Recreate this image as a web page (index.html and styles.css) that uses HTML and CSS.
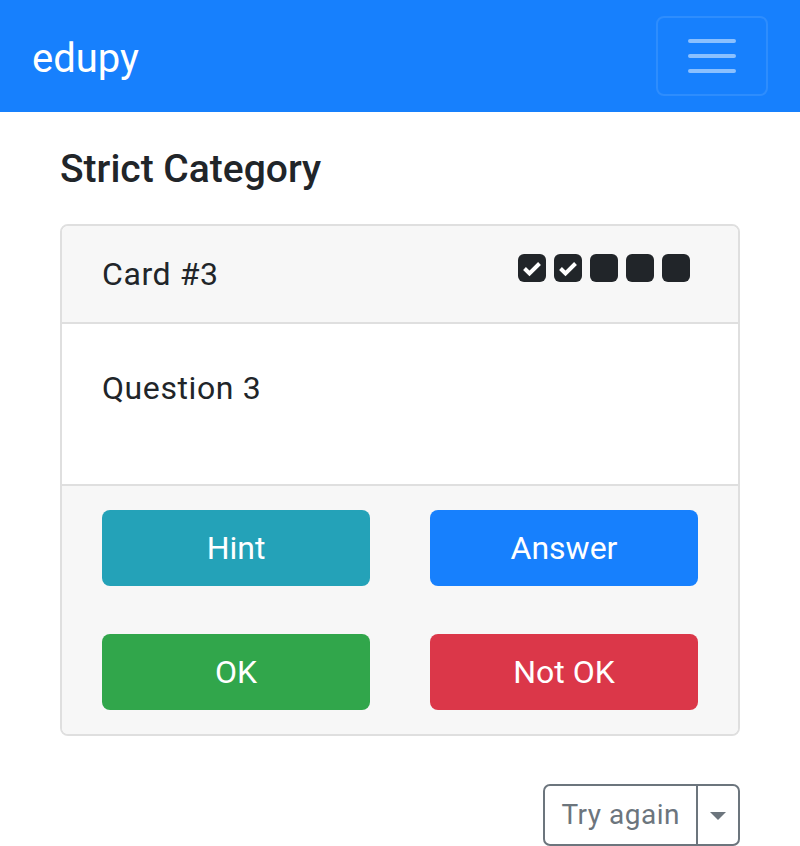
FILE: index.html
```html
<!DOCTYPE html>
<html lang="en">
<head>
<meta charset="utf-8">
<title>edupy</title>
<link rel="stylesheet" href="styles.css">
</head>
<body>
<nav class="navbar">
  <a class="brand" href="#">edupy</a>
  <button class="toggler" type="button" aria-label="Toggle navigation">
    <svg width="60" height="60" viewBox="0 0 60 60" class="toggler-icon">
      <path d="M8 15h44M8 30h44M8 45h44" stroke="rgba(255,255,255,0.5)" stroke-width="4" stroke-linecap="round" fill="none"/>
    </svg>
  </button>
</nav>
<main class="container">
  <h4 class="title">Strict Category</h4>
  <div class="card">
    <div class="card-header">
      <span class="card-title">Card #3</span>
      <span class="progress">
        <svg class="box" viewBox="0 0 28 28"><rect width="28" height="28" rx="6" fill="#212529"/><path d="M6.5 14.5l5 5 10-10" stroke="#fff" stroke-width="4" fill="none" stroke-linejoin="miter" stroke-linecap="butt"/></svg>
        <svg class="box" viewBox="0 0 28 28"><rect width="28" height="28" rx="6" fill="#212529"/><path d="M6.5 14.5l5 5 10-10" stroke="#fff" stroke-width="4" fill="none" stroke-linejoin="miter" stroke-linecap="butt"/></svg>
        <svg class="box" viewBox="0 0 28 28"><rect width="28" height="28" rx="6" fill="#212529"/></svg>
        <svg class="box" viewBox="0 0 28 28"><rect width="28" height="28" rx="6" fill="#212529"/></svg>
        <svg class="box" viewBox="0 0 28 28"><rect width="28" height="28" rx="6" fill="#212529"/></svg>
      </span>
    </div>
    <div class="card-body">
      <p class="question">Question 3</p>
    </div>
    <div class="card-footer">
      <button class="btn btn-info" type="button">Hint</button>
      <button class="btn btn-primary" type="button">Answer</button>
      <button class="btn btn-success" type="button">OK</button>
      <button class="btn btn-danger" type="button">Not OK</button>
    </div>
  </div>
  <div class="actions">
    <div class="split">
      <span class="split-label">Try again</span>
      <span class="split-toggle"><span class="caret"></span></span>
    </div>
  </div>
</main>
</body>
</html>
```

FILE: styles.css
```css
* { box-sizing: border-box; }

body {
  margin: 0;
  font-family: Roboto, "Liberation Sans", sans-serif;
  color: #212529;
  background: #fff;
}

.navbar {
  display: flex;
  justify-content: space-between;
  align-items: center;
  background: #1780fd;
  padding: 16px 32px;
  height: 112px;
}

.brand {
  color: #fff;
  text-decoration: none;
  font-size: 40px;
  line-height: 60px;
  margin-top: 6px;
}

.toggler {
  width: 112px;
  height: 80px;
  border: 2px solid rgba(255, 255, 255, 0.1);
  border-radius: 8px;
  background: transparent;
  padding: 8px 24px;
  display: flex;
  align-items: center;
  justify-content: center;
}

.toggler-icon { display: block; }

.container {
  padding: 33px 60px 0;
}

.title {
  margin: 0 0 31px;
  font-size: 39px;
  line-height: 48px;
  font-weight: 500;
}

.card {
  border: 2px solid #dfdfdf;
  border-radius: 8px;
  overflow: hidden;
}

.card-header {
  display: flex;
  justify-content: space-between;
  align-items: center;
  background: #f7f7f7;
  padding: 24px 40px;
  border-bottom: 2px solid #dfdfdf;
}

.card-title {
  font-size: 32px;
  line-height: 48px;
  letter-spacing: 0.6px;
}

.progress {
  display: flex;
  gap: 8px;
  margin-right: 8px;
  margin-top: -12px;
}

.box {
  width: 28px;
  height: 28px;
  display: block;
}

.card-body {
  padding: 40px;
}

.question {
  margin: 0 0 32px;
  font-size: 32px;
  line-height: 48px;
  letter-spacing: 0.6px;
}

.card-footer {
  display: grid;
  grid-template-columns: 268px 268px;
  column-gap: 60px;
  row-gap: 48px;
  background: #f7f7f7;
  border-top: 2px solid #dfdfdf;
  padding: 24px 40px;
}

.btn {
  height: 76px;
  border: none;
  border-radius: 8px;
  color: #fff;
  font-family: inherit;
  font-size: 32px;
  padding: 0;
}

.btn-info { background: #24a2b8; }
.btn-primary { background: #1780fd; }
.btn-success { background: #31a64b; }
.btn-danger { background: #db3749; }

.actions {
  display: flex;
  justify-content: flex-end;
  margin-top: 48px;
}

.split {
  display: flex;
  border: 2px solid #6c757d;
  border-radius: 7px;
  color: #6c757d;
}

.split-label {
  padding: 8px 16px;
  font-size: 28px;
  line-height: 42px;
  letter-spacing: 0.5px;
}

.split-toggle {
  width: 42px;
  border-left: 2px solid #6c757d;
  display: flex;
  align-items: center;
  justify-content: center;
}

.caret {
  width: 0;
  height: 0;
  border-top: 8px solid #6c757d;
  border-left: 8px solid transparent;
  border-right: 8px solid transparent;
  margin-top: 2px;
}
```
